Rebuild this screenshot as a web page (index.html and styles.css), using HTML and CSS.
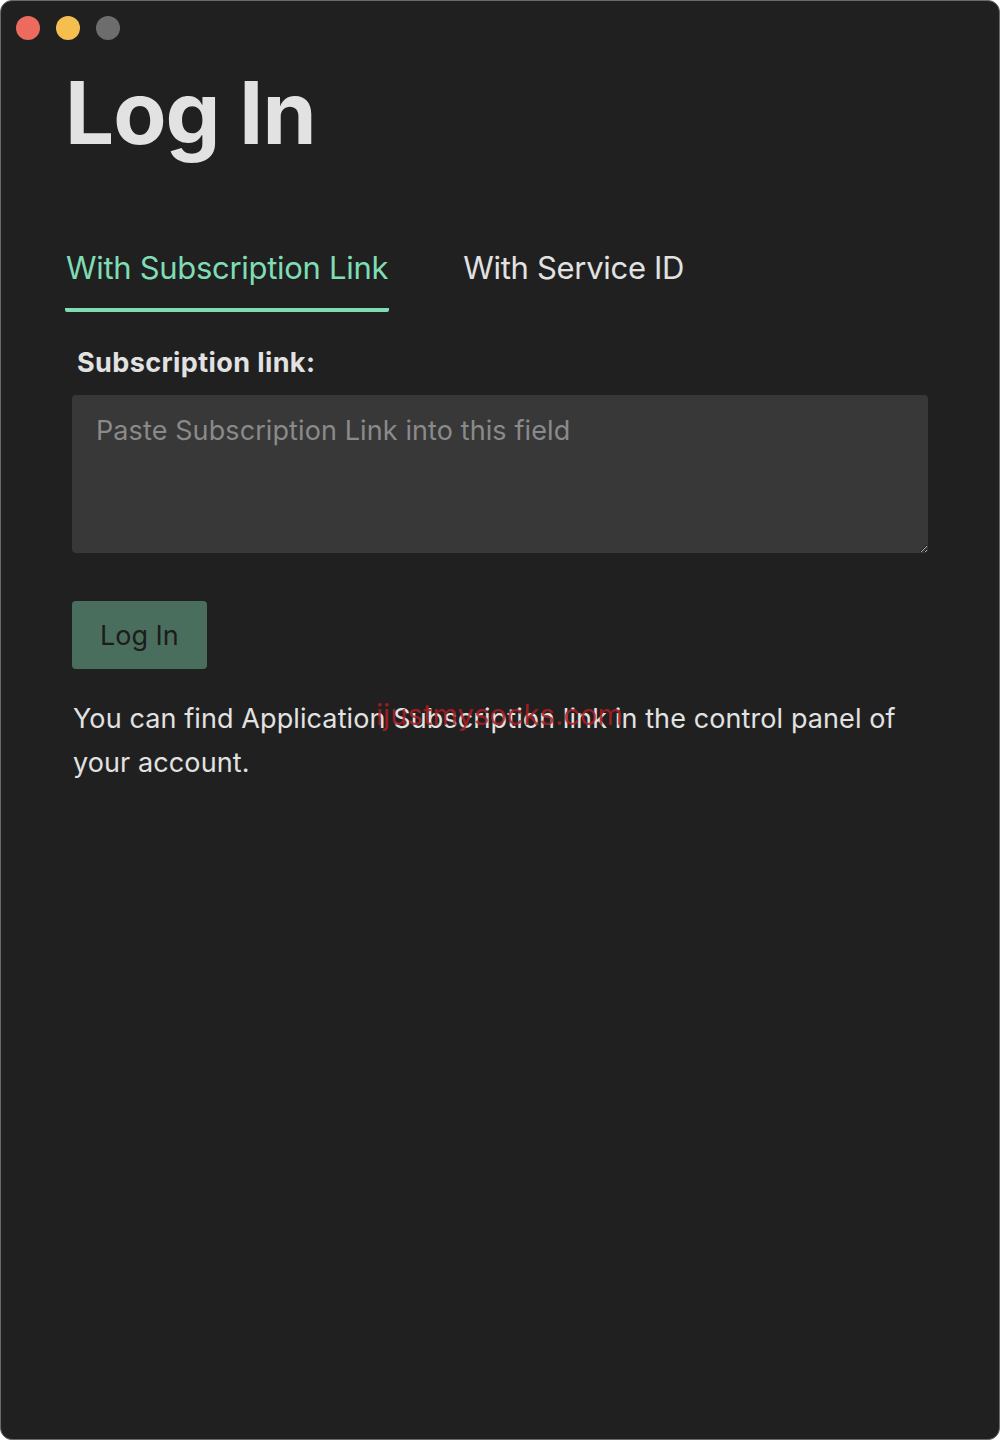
FILE: index.html
```html
<!DOCTYPE html>
<html>
    <head>
        <title>Log In</title>
        <meta charset="utf-8"/>
        <link rel="stylesheet" href="styles.css">
    </head>
    <body>
        <div class="window">
            <div class="titlebar">
                <span class="light close"></span>
                <span class="light min"></span>
                <span class="light zoom"></span>
            </div>
            <div class="content">
                <h1>Log In</h1>
                <div class="tabs">
                    <span class="tab active">With Subscription Link</span>
                    <span class="tab">With Service ID</span>
                </div>
                <div class="form">
                    <label class="lbl" for="link">Subscription link:</label>
                    <textarea id="link" placeholder="Paste Subscription Link into this field"></textarea>
                    <button class="btn" type="button">Log In</button>
                    <p class="hint">You can find Application Subscription link in the control panel of your account.<span class="mark">ijustmysocks.com</span></p>
                </div>
            </div>
        </div>
    </body>
</html>
```

FILE: styles.css
```css
* { box-sizing: border-box; }

html, body {
    background: #fff;
    margin: 0px;
    padding: 0px;
}

body {
    font-family: Inter, "Liberation Sans", sans-serif;
    color: #e2e2e2;
}

.window {
    background: #202020;
    border: 1px solid #6a6a6a;
    border-radius: 12px;
    height: 1440px;
    overflow: hidden;
    width: 1000px;
}

.titlebar {
    display: flex;
    gap: 16px;
    padding: 15px 0px 0px 15px;
}

.light {
    border-radius: 50%;
    display: block;
    height: 24px;
    width: 24px;
}

.close { background: #ec6a5e; }
.min { background: #f4bf4f; }
.zoom { background: #6d6d6d; }

.content {
    padding: 0px 0px 0px 64px;
}

h1 {
    font-size: 87px;
    font-weight: 700;
    letter-spacing: -1px;
    line-height: 1;
    margin: 29px 0px 0px 0px;
}

.tabs {
    display: flex;
    gap: 73px;
    margin-top: 93px;
}

.tab {
    font-size: 31px;
    letter-spacing: -0.3px;
    padding: 0px 1px 22px 1px;
}

.tab.active {
    border-bottom: 4px solid #7fdcb4;
    border-radius: 2px;
    color: #7fdcb4;
}

.form {
    padding: 34px 71px 0px 7px;
    position: relative;
}

.lbl {
    display: block;
    font-size: 27px;
    font-weight: 700;
    letter-spacing: 0.4px;
    margin-left: 5px;
}

textarea {
    background: #383838;
    border: none;
    border-radius: 4px;
    color: #e2e2e2;
    display: block;
    font-family: inherit;
    font-size: 27px;
    height: 158px;
    letter-spacing: 0.1px;
    margin-top: 16px;
    outline: none;
    padding: 19px 24px;
    width: 100%;
}

textarea::placeholder { color: #8a8a8a; }

.btn {
    background: #4a6e5e;
    border: none;
    border-radius: 4px;
    color: #1c1c1c;
    display: block;
    font-family: inherit;
    font-size: 27px;
    height: 68px;
    margin-top: 48px;
    padding: 0px 28px;
}

.hint {
    font-size: 27px;
    letter-spacing: 0.1px;
    line-height: 44px;
    margin: 28px 0px 0px 1px;
    position: relative;
}

.mark {
    color: rgba(175, 30, 35, 0.85);
    font-size: 29px;
    left: 303px;
    position: absolute;
    top: -4px;
}
```
